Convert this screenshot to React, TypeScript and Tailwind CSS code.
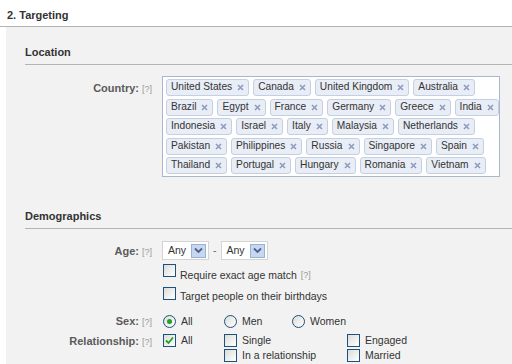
import React from 'react';

const FONT = { fontFamily: '"Liberation Sans", Arial, sans-serif' };

const ROWS: string[][] = [
  ['United States', 'Canada', 'United Kingdom', 'Australia'],
  ['Brazil', 'Egypt', 'France', 'Germany', 'Greece', 'India'],
  ['Indonesia', 'Israel', 'Italy', 'Malaysia', 'Netherlands'],
  ['Pakistan', 'Philippines', 'Russia', 'Singapore', 'Spain'],
  ['Thailand', 'Portugal', 'Hungary', 'Romania', 'Vietnam'],
];

const Help = () => <span className="ml-[3px] text-[9px] font-normal text-[#999]">[?]</span>;

const Label = ({ text, className = '' }: { text: string; className?: string }) => (
  <div className={`w-[127px] shrink-0 text-right text-[11px] font-bold text-[#5a5a5a] leading-[14px] ${className}`}>
    {text}
    <Help />
  </div>
);

const Tag = ({ name }: { name: string }) => (
  <div className="flex h-[17px] items-center gap-[5px] rounded-[3px] border border-[#c5cfe3] bg-[#e8edf6] pl-[4px] pr-[4px] text-[10.2px] leading-none text-[#333]">
    <span>{name}</span>
    <svg width="7" height="7" viewBox="0 0 7 7">
      <path d="M1 1L6 6M6 1L1 6" stroke="#8d9cc0" strokeWidth="1.6" />
    </svg>
  </div>
);

const Check = ({ checked = false }: { checked?: boolean }) => (
  <div className="flex h-[13px] w-[13px] shrink-0 items-center justify-center border border-[#1c5180] bg-gradient-to-br from-[#dcdcd7] to-white">
    {checked && (
      <svg width="9" height="9" viewBox="0 0 9 9">
        <path d="M1 4.5L3.5 7L8 1.5" fill="none" stroke="#21a121" strokeWidth="1.8" />
      </svg>
    )}
  </div>
);

const Radio = ({ checked = false }: { checked?: boolean }) => (
  <div className="flex h-[13px] w-[13px] shrink-0 items-center justify-center rounded-full border border-[#1c5180] bg-gradient-to-br from-[#dcdcd7] to-white">
    {checked && <div className="h-[5px] w-[5px] rounded-full bg-[#21a121]" />}
  </div>
);

const Select = () => (
  <div className="flex h-[19px] w-[47px] items-center justify-between border border-[#d4d4d4] bg-white pl-[5px] pr-[2px] text-[10.5px] text-[#333]">
    <span>Any</span>
    <div className="flex h-[14px] w-[15px] items-center justify-center border border-[#98b1d7] bg-[#c6d7f2]">
      <svg width="9" height="7" viewBox="0 0 9 7">
        <path d="M1 1.5L4.5 5L8 1.5" fill="none" stroke="#4d6185" strokeWidth="1.8" />
      </svg>
    </div>
  </div>
);

const Section = ({ title, className = '' }: { title: string; className?: string }) => (
  <div className={`border-b border-[#b3b3b3] pb-[5px] text-[11px] font-bold leading-[14px] text-[#333] ${className}`}>
    {title}
  </div>
);

export default function App() {
  return (
    <div className="h-[364px] w-[512px] overflow-hidden bg-white" style={FONT}>
      <div className="h-[27px] border-b border-[#b3b3b3] pl-[7px] pt-[8px] text-[11px] font-bold leading-[14px] text-[#333]">
        2. Targeting
      </div>
      <div className="ml-[6px] h-[337px] bg-[#f2f2f2] pl-[19px]">
        <Section title="Location" className="pt-[18px]" />

        <div className="mt-[11px] flex">
          <Label text="Country:" className="pt-[5px]" />
          <div className="ml-[10px] flex h-[101px] w-[338px] flex-col gap-[2.5px] border border-[#aab6d0] bg-white pl-[3px] pt-[2px]">
            {ROWS.map((row, i) => (
              <div key={i} className="flex gap-[4px]">
                {row.map((c) => (
                  <Tag key={c} name={c} />
                ))}
              </div>
            ))}
          </div>
        </div>

        <Section title="Demographics" className="mt-[32px]" />

        <div className="mt-[12px] flex">
          <Label text="Age:" className="pt-[3px]" />
          <div className="ml-[10px] flex flex-col">
            <div className="flex items-center gap-[4px] text-[10.5px] text-[#666]">
              <Select />
              <span>-</span>
              <Select />
            </div>
            <div className="mt-[4px] flex h-[19px] items-start gap-[4px] pl-[1px] text-[10.5px] text-[#333]">
              <Check />
              <span className="mt-[5px] leading-[13px]">
                Require exact age match<span className="ml-[4px] align-top text-[9px] text-[#999]">[?]</span>
              </span>
            </div>
            <div className="mt-[4px] flex h-[19px] items-start gap-[4px] pl-[1px] text-[10.5px] text-[#333]">
              <Check />
              <span className="mt-[3px] leading-[13px]">Target people on their birthdays</span>
            </div>
          </div>
        </div>

        <div className="mt-[8px] flex items-center">
          <Label text="Sex:" />
          <div className="ml-[11px] flex items-center text-[10.5px] text-[#333]">
            <div className="flex w-[61px] items-center gap-[5px]"><Radio checked /><span>All</span></div>
            <div className="flex w-[68px] items-center gap-[5px]"><Radio /><span>Men</span></div>
            <div className="flex items-center gap-[5px]"><Radio /><span>Women</span></div>
          </div>
        </div>

        <div className="mt-[4px] flex items-start">
          <Label text="Relationship:" />
          <div className="ml-[11px] grid grid-cols-[61px_123px_auto] gap-y-[2px] text-[10.5px] leading-[13px] text-[#333]">
            <div className="flex items-center gap-[5px]"><Check checked /><span>All</span></div>
            <div className="flex items-center gap-[5px]"><Check /><span>Single</span></div>
            <div className="flex items-center gap-[5px]"><Check /><span>Engaged</span></div>
            <div />
            <div className="flex items-center gap-[5px]"><Check /><span>In a relationship</span></div>
            <div className="flex items-center gap-[5px]"><Check /><span>Married</span></div>
          </div>
        </div>
      </div>
    </div>
  );
}
